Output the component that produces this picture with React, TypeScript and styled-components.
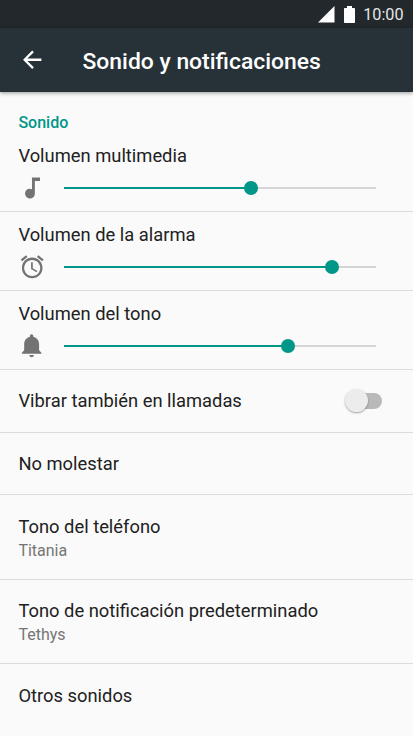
import { FC } from 'react';
import { createGlobalStyle, styled } from 'styled-components';

const ICONS = {
  back: 'M20 11H7.83l5.59-5.59L12 4l-8 8 8 8 1.41-1.41L7.83 13H20v-2z',
  music: 'M11.8 3v10.2A4.3 4.3 0 1 0 14.3 17V6.2h4.5V3z',
  alarm:
    'M22 5.72l-4.6-3.86-1.29 1.53 4.6 3.86L22 5.72zM7.88 3.39L6.6 1.86 2 5.71l1.29 1.53 4.59-3.85zM12.5 8H11v6l4.75 2.85.75-1.23-4-2.37V8zM12 4c-4.97 0-9 4.03-9 9s4.02 9 9 9c4.97 0 9-4.03 9-9s-4.03-9-9-9zm0 16c-3.87 0-7-3.13-7-7s3.13-7 7-7 7 3.13 7 7-3.13 7-7 7z',
  bell: 'M11.5 22c1.1 0 2-.9 2-2h-4c0 1.1.9 2 2 2zm6.5-6v-5.5c0-3.07-2.13-5.64-5-6.32V3.5c0-.83-.67-1.5-1.5-1.5S10 2.67 10 3.5v.68c-2.87.68-5 3.25-5 6.32V16l-2 2v1h17v-1l-2-2z',
};

type IconName = keyof typeof ICONS;

interface Volume {
  label: string;
  icon: IconName;
  value: number;
}

const volumes: Volume[] = [
  { label: 'Volumen multimedia', icon: 'music', value: 60 },
  { label: 'Volumen de la alarma', icon: 'alarm', value: 85.8 },
  { label: 'Volumen del tono', icon: 'bell', value: 71.7 },
];

const Icon: FC<{ name: IconName }> = ({ name }) => (
  <StyledIcon viewBox="-0.4 0 24 24">
    <path d={ICONS[name]} />
  </StyledIcon>
);

const VolumeItem: FC<Volume> = ({ label, icon, value }) => (
  <VolumeWrap>
    <Label>{label}</Label>
    <SliderRow>
      <Icon name={icon} />
      <Track>
        <Fill style={{ width: `${value}%` }} />
        <Thumb style={{ left: `${value}%` }} />
      </Track>
    </SliderRow>
  </VolumeWrap>
);

const App: FC = () => {
  return (
    <Screen>
      <GlobalStyle />
      <StatusBar>
        <Signal viewBox="0 0 17 17">
          <path d="M16.5 0v16.5H0z" />
        </Signal>
        <Battery viewBox="0 0 11 17">
          <path d="M3 0h5v2h2.2q.8 0 .8.8v13.4q0 .8-.8.8H.8q-.8 0-.8-.8V2.8q0-.8.8-.8H3z" />
        </Battery>
        <Clock>10:00</Clock>
      </StatusBar>
      <AppBar>
        <Icon name="back" />
        <Title>Sonido y notificaciones</Title>
      </AppBar>
      <SectionTitle>Sonido</SectionTitle>
      {volumes.map((volume) => (
        <VolumeItem key={volume.label} {...volume} />
      ))}
      <Item $height={62.6}>
        <Label>Vibrar también en llamadas</Label>
        <Switch>
          <Knob />
        </Switch>
      </Item>
      <Item $height={62.6}>
        <Label>No molestar</Label>
      </Item>
      <Item $height={84.5}>
        <TextBox>
          <Label>Tono del teléfono</Label>
          <Summary>Titania</Summary>
        </TextBox>
      </Item>
      <Item $height={84.5}>
        <TextBox>
          <Label>Tono de notificación predeterminado</Label>
          <Summary>Tethys</Summary>
        </TextBox>
      </Item>
      <Item $height={63}>
        <Label>Otros sonidos</Label>
      </Item>
    </Screen>
  );
};

export default App;

const GlobalStyle = createGlobalStyle`
  * {
    box-sizing: border-box;
  }

  body {
    margin: 0;
    overflow: hidden;
    background-color: #fafafa;
    font-family: Roboto, sans-serif;
  }
`;

const Screen = styled.div`
  width: 413px;
  height: 736px;
  overflow: hidden;
  color: #212121;
  background-color: #fafafa;
`;

const StatusBar = styled.div`
  display: flex;
  align-items: center;
  justify-content: flex-end;
  height: 28px;
  padding-right: 9.5px;
  color: #e4e6e7;
  background-color: #22282b;
`;

const Signal = styled.svg`
  width: 17px;
  height: 17px;
  margin-right: 9px;
  fill: white;
`;

const Battery = styled.svg`
  width: 11px;
  height: 17px;
  margin-right: 8px;
  fill: white;
`;

const Clock = styled.span`
  padding-top: 1px;
  font-size: 16.2px;
  line-height: 20px;
`;

const StyledIcon = styled.svg`
  flex: none;
  width: 27.5px;
  height: 27.5px;
  fill: #737373;
`;

const AppBar = styled.header`
  position: relative;
  display: flex;
  align-items: center;
  height: 64px;
  padding: 0 18.4px;
  color: white;
  background-color: #263238;
  box-shadow: 0 1px 4px rgba(0, 0, 0, 0.4);

  ${StyledIcon} {
    fill: white;
  }
`;

const Title = styled.h1`
  margin: 4px 0 0 36.6px;
  font-size: 22.9px;
  font-weight: 500;
  line-height: 28px;
`;

const SectionTitle = styled.h2`
  margin: 0;
  padding: 21px 18.4px 0;
  height: 41px;
  color: #009688;
  font-size: 16px;
  font-weight: 500;
  line-height: 20px;
`;

const Label = styled.p`
  margin: 0;
  font-size: 18.35px;
  line-height: 24px;
  white-space: nowrap;
`;

const Summary = styled.p`
  margin: 0;
  color: #757575;
  font-size: 16px;
  line-height: 23px;
`;

const VolumeWrap = styled.div`
  height: 79px;
  padding: 11px 18.4px 0;
  border-bottom: 1px solid #dcdcdc;
`;

const SliderRow = styled.div`
  display: flex;
  align-items: center;
  height: 40px;
`;

const Track = styled.div`
  position: relative;
  width: 312px;
  height: 2px;
  margin-left: 18.1px;
  background-color: #d4d4d4;
`;

const Fill = styled.div`
  height: 100%;
  background-color: #009688;
`;

const Thumb = styled.div`
  position: absolute;
  top: -6px;
  width: 14px;
  height: 14px;
  margin-left: -7px;
  border-radius: 50%;
  background-color: #009688;
`;

const Item = styled.div<{ $height: number }>`
  display: flex;
  align-items: center;
  justify-content: space-between;
  height: ${({ $height }) => $height}px;
  padding: 1px 31px 0 18.4px;
  border-bottom: 1px solid #dcdcdc;

  &:last-child {
    border-bottom: none;
  }
`;

const TextBox = styled.div`
  padding-top: 2px;
`;

const Switch = styled.div`
  position: relative;
  width: 36px;
  height: 16px;
  border-radius: 8px;
  background-color: #b9b9b9;
`;

const Knob = styled.div`
  position: absolute;
  top: -4px;
  left: -1.5px;
  width: 23px;
  height: 23px;
  border-radius: 50%;
  background-color: #ececec;
  box-shadow: 0 1px 2px rgba(0, 0, 0, 0.35);
`;
